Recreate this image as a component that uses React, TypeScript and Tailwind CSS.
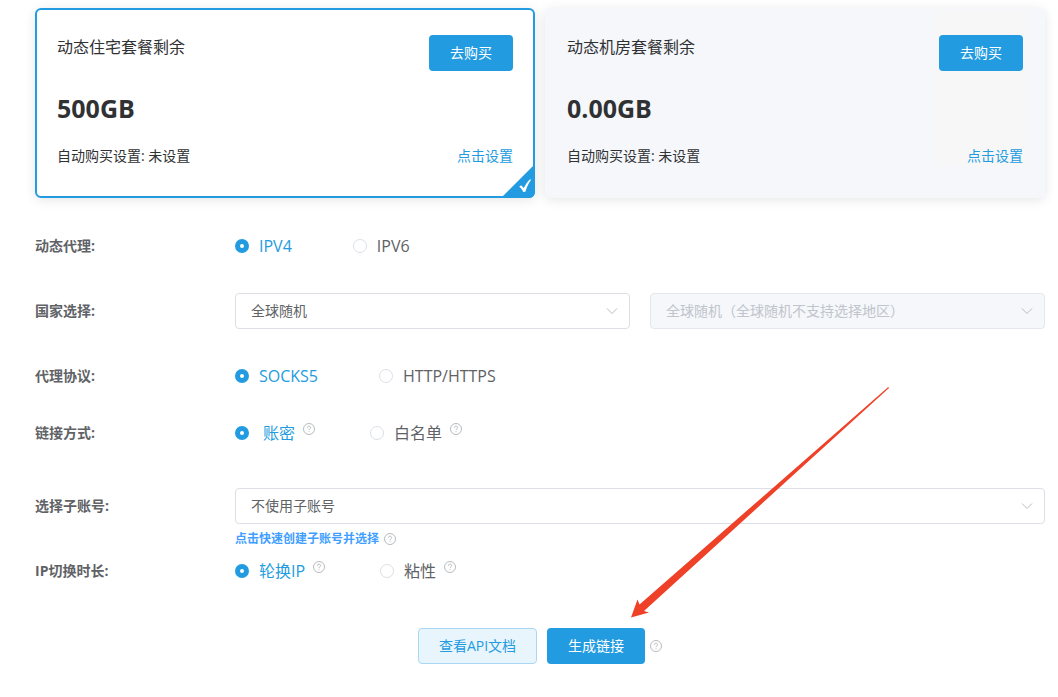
import React, { useState } from 'react';

interface PackageCardProps {
    title: string;
    amount: string;
    active?: boolean;
}

interface RadioOption {
    value: string;
    label: string;
    help?: boolean;
    spaced?: boolean;
}

interface RadioRowProps {
    name: string;
    label: string;
    options: RadioOption[];
}

const HelpIcon: React.FC = () => (
    <svg viewBox="0 0 12 12" className="h-3 w-3 shrink-0" fill="none" stroke="#a6a9ad" strokeWidth="0.8" aria-hidden="true">
        <circle cx="6" cy="6" r="5.5" />
        <path d="M4.4 4.9C4.4 3.8 5.1 3.2 6 3.2s1.6.6 1.6 1.5c0 1.1-1.6 1.2-1.6 2.5" />
        <path d="M6 8.2v.9" />
    </svg>
);

const PackageCard: React.FC<PackageCardProps> = ({ title, amount, active }) => (
    <section
        className={`relative flex flex-1 justify-between rounded-md border-2 pr-4 pb-[30px] pl-5 shadow-[0_2px_12px_rgba(0,0,0,0.1)] ${
            active ? 'border-[#239be0] bg-white' : 'border-[#f5f7fb] bg-[#f5f7fb]'
        }`}
    >
        <div className="pt-[25px]">
            <h2 className="text-base leading-6">{title}</h2>
            <p className="mt-[31px] text-[25px] leading-9 font-bold">{amount}</p>
            <p className="mt-5 text-sm leading-5">自动购买设置: 未设置</p>
        </div>
        <div className={`flex flex-col items-end justify-between px-1 pt-[25px] ${active ? '' : 'bg-[#f7f7f7]'}`}>
            <button type="button" className="h-9 rounded bg-[#239be0] px-[21px] text-sm text-white">
                去购买
            </button>
            <a href="#" className="text-sm leading-5 text-[#239be0]">点击设置</a>
        </div>
        {active && (
            <svg viewBox="0 0 34 34" className="absolute -right-0.5 -bottom-0.5 h-[34px] w-[34px]" aria-hidden="true">
                <path d="M34 0v28a6 6 0 0 1-6 6H0z" fill="#239be0" />
                <path d="M18.2 22.8l2-1.5 2.6 2.7c1.6-3.3 3.3-6 6-8.6l1.4.1c-2.8 4-4.5 7.7-5.8 12.3l-2.1.2c-1-2.1-2.3-3.8-4.1-5.2z" fill="#fff" />
            </svg>
        )}
    </section>
);

const RadioRow: React.FC<RadioRowProps> = ({ name, label, options }) => {
    const [value, setValue] = useState(options[0].value);

    return (
        <div role="radiogroup" aria-label={label} className="flex h-9 items-center">
            <span className="w-[200px] shrink-0 text-sm font-bold">{label}</span>
            <div className={`flex items-center ${options[0].help ? 'gap-[55px]' : 'gap-[61px]'}`}>
                {options.map((option) => (
                    <label key={option.value} className="flex cursor-pointer items-center">
                        <input
                            type="radio"
                            name={name}
                            value={option.value}
                            checked={value === option.value}
                            onChange={() => setValue(option.value)}
                            className="h-3.5 w-3.5 appearance-none rounded-full border border-[#dcdfe6] bg-white checked:border-5 checked:border-[#239be0]"
                        />
                        <span
                            className={`text-base leading-6 ${option.spaced ? 'pl-3.5' : 'pl-2.5'} ${
                                value === option.value ? 'text-[#239be0]' : ''
                            }`}
                        >
                            {option.label}
                        </span>
                        {option.help && (
                            <span className="pb-2 pl-2">
                                <HelpIcon />
                            </span>
                        )}
                    </label>
                ))}
            </div>
        </div>
    );
};

const SelectBox: React.FC<{ id: string; text: string; disabled?: boolean }> = ({ id, text, disabled }) => (
    <div className="relative flex-1">
        <select
            id={id}
            aria-label={text}
            disabled={disabled}
            className="block h-9 w-full appearance-none rounded border border-[#dcdfe6] bg-white px-[15px] text-sm disabled:border-[#e4e7ed] disabled:bg-[#f5f7fa] disabled:text-[#c0c4cc] disabled:opacity-100"
        >
            <option>{text}</option>
        </select>
        <svg viewBox="0 0 12 12" className="pointer-events-none absolute top-3 right-3 h-3 w-3" fill="none" stroke="#b8bcc4" aria-hidden="true">
            <path d="M1 3.500l5 5 5-5" />
        </svg>
    </div>
);

export default function App() {
    return (
        <main className="pt-2 pr-[13px] pb-8 pl-[35px] font-['Open_Sans','Noto_Sans_CJK_SC',sans-serif] text-[#606266]">
            <div className="flex gap-2.5 text-[#303133]">
                <PackageCard title="动态住宅套餐剩余" amount="500GB" active />
                <PackageCard title="动态机房套餐剩余" amount="0.00GB" />
            </div>

            <form className="pt-[30px]" onSubmit={(e) => e.preventDefault()}>
                <RadioRow
                    name="version"
                    label="动态代理:"
                    options={[{ value: 'ipv4', label: 'IPV4' }, { value: 'ipv6', label: 'IPV6' }]}
                />

                <div className="flex items-center py-[29px]">
                    <label htmlFor="country" className="w-[200px] shrink-0 text-sm font-bold">国家选择:</label>
                    <div className="flex flex-1 gap-5">
                        <SelectBox id="country" text="全球随机" />
                        <SelectBox id="region" text="全球随机（全球随机不支持选择地区）" disabled />
                    </div>
                </div>

                <div className="flex flex-col gap-[21px]">
                    <RadioRow
                        name="protocol"
                        label="代理协议:"
                        options={[{ value: 'socks5', label: 'SOCKS5' }, { value: 'http', label: 'HTTP/HTTPS' }]}
                    />
                    <RadioRow
                        name="auth"
                        label="链接方式:"
                        options={[
                            { value: 'password', label: '账密', help: true, spaced: true },
                            { value: 'whitelist', label: '白名单', help: true }
                        ]}
                    />
                </div>

                <div className="flex items-center pt-[37px]">
                    <label htmlFor="account" className="w-[200px] shrink-0 text-sm font-bold">选择子账号:</label>
                    <SelectBox id="account" text="不使用子账号" />
                </div>
                <div className="flex h-[29px] items-center gap-[5px] pt-px pl-[200px]">
                    <a href="#" className="text-xs font-bold text-[#409eff]">点击快速创建子账号并选择</a>
                    <HelpIcon />
                </div>

                <RadioRow
                    name="rotation"
                    label="IP切换时长:"
                    options={[{ value: 'rotate', label: '轮换IP', help: true }, { value: 'sticky', label: '粘性', help: true }]}
                />

                <div className="flex items-center justify-center pt-[39px]">
                    <button type="button" className="h-9 rounded border border-[#a7d7f3] bg-[#e9f5fc] px-5 text-sm text-[#239be0]">
                        查看API文档
                    </button>
                    <div className="relative ml-2.5">
                        <button type="submit" className="h-9 rounded bg-[#239be0] px-[21px] text-sm text-white">
                            生成链接
                        </button>
                        {/* arrow pointing at the generate button */}
                        <svg viewBox="0 0 258 231" className="pointer-events-none absolute bottom-full left-21 mb-2.5 h-[231px] w-[258px]" fill="#ee4128" aria-hidden="true">
                            <path d="M257.300 0L8.500 217.500 6.500 212.500 0 230.500 18 225.500 13 224 258 1z" />
                        </svg>
                    </div>
                    <span className="pl-[5px]">
                        <HelpIcon />
                    </span>
                </div>
            </form>
        </main>
    );
}
